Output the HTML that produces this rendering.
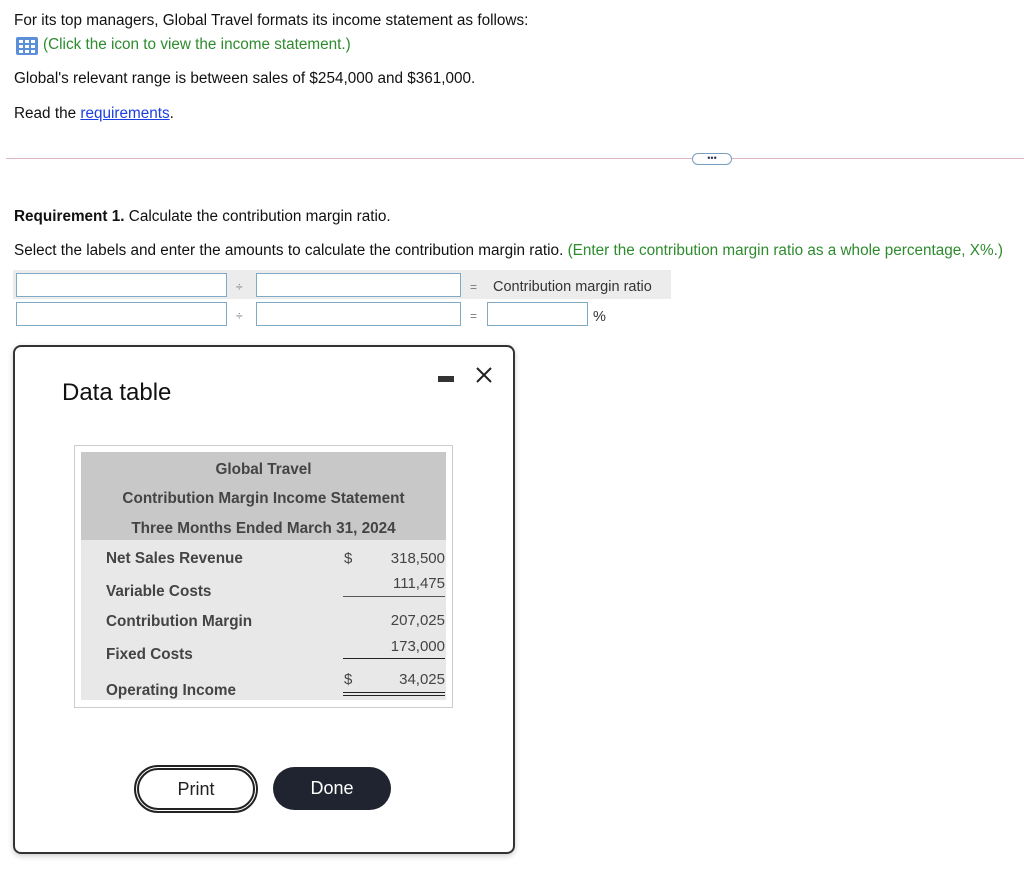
<!DOCTYPE html>
<html><head><style>
body{margin:0;width:1024px;height:879px;background:#fff;font-family:"Liberation Sans",Arial,sans-serif;color:#111;position:relative;overflow:hidden}
.a{position:absolute;white-space:nowrap}
.t{font-size:15.3px}
.inp{position:absolute;height:21px;border:1px solid #7fa9c4;background:#fff;box-sizing:border-box}
.op{position:absolute;font-size:12px;color:#777}
.tb{position:absolute;font-weight:bold;font-size:15.3px;color:#444}
.n{position:absolute;font-size:15px;color:#444;text-align:right;width:80px}
</style></head><body>
<div class="a t" style="left:14px;top:12px">For its top managers, Global Travel formats its income statement as follows:</div>
<svg class="a" style="left:16px;top:37px" width="22" height="18" viewBox="0 0 22 18"><rect x="0" y="0" width="22" height="18" rx="2" fill="#5b8fd9"/><g fill="#fff"><rect x="3" y="3" width="4" height="3"/><rect x="9" y="3" width="4" height="3"/><rect x="15" y="3" width="4" height="3"/><rect x="3" y="8" width="4" height="3"/><rect x="9" y="8" width="4" height="3"/><rect x="15" y="8" width="4" height="3"/><rect x="3" y="13" width="4" height="3"/><rect x="9" y="13" width="4" height="3"/><rect x="15" y="13" width="4" height="3"/></g></svg>
<div class="a t" style="left:43px;top:36px;color:#2e8b2e">(Click the icon to view the income statement.)</div>
<div class="a t" style="left:14px;top:70px">Global's relevant range is between sales of $254,000 and $361,000.</div>
<div class="a t" style="left:14px;top:105px">Read the <span style="color:#1a3fe0;text-decoration:underline">requirements</span>.</div>
<div class="a" style="left:6px;top:158px;width:1018px;height:1px;background:#dcb8c4"></div>
<div class="a" style="left:692px;top:153px;width:38px;height:10px;border:1px solid #7a9cc0;border-radius:6px;background:#fff;font-size:9px;line-height:8px;text-align:center;color:#335">•••</div>
<div class="a t" style="left:14px;top:208px"><b>Requirement 1.</b> Calculate the contribution margin ratio.</div>
<div class="a t" style="left:14px;top:242px">Select the labels and enter the amounts to calculate the contribution margin ratio. <span style="color:#2e8b2e">(Enter the contribution margin ratio as a whole percentage, X%.)</span></div>
<div class="a" style="left:13px;top:270px;width:658px;height:29px;background:#ececec"></div>
<div class="inp" style="left:16px;top:273px;width:211px;height:24px"></div>
<div class="op" style="left:236px;top:280px">÷</div>
<div class="inp" style="left:256px;top:273px;width:205px;height:24px"></div>
<div class="op" style="left:470px;top:280px">=</div>
<div class="a" style="left:493px;top:279px;color:#333;font-size:14.5px">Contribution margin ratio</div>
<div class="inp" style="left:16px;top:302px;width:211px;height:24px"></div>
<div class="op" style="left:236px;top:309px">÷</div>
<div class="inp" style="left:256px;top:302px;width:205px;height:24px"></div>
<div class="op" style="left:470px;top:309px">=</div>
<div class="inp" style="left:487px;top:302px;width:101px;height:24px"></div>
<div class="a" style="left:593px;top:309px;color:#333;font-size:14.5px">%</div>

<div class="a" style="left:13px;top:345px;width:498px;height:505px;border:2px solid #333;border-radius:8px;box-shadow:0 2px 6px rgba(0,0,0,.2)"></div>
<div class="a" style="left:62px;top:379px;font-size:24px;color:#111">Data table</div>
<div class="a" style="left:438px;top:376px;width:16px;height:6px;background:#333"></div>
<svg class="a" style="left:475px;top:366px" width="18" height="18"><path d="M2 2L16 16M16 2L2 16" stroke="#222" stroke-width="2"/></svg>

<div class="a" style="left:74px;top:445px;width:377px;height:261px;border:1px solid #ccc"></div>
<div class="a" style="left:81px;top:452px;width:365px;height:88px;background:#c8c8c8"></div>
<div class="a" style="left:81px;top:540px;width:365px;height:160px;background:#e8e8e8"></div>
<div class="tb" style="left:81px;width:365px;text-align:center;top:461px">Global Travel</div>
<div class="tb" style="left:81px;width:365px;text-align:center;top:490px">Contribution Margin Income Statement</div>
<div class="tb" style="left:81px;width:365px;text-align:center;top:520px">Three Months Ended March 31, 2024</div>
<div class="tb" style="left:106px;top:550px">Net Sales Revenue</div>
<div class="tb" style="left:106px;top:583px">Variable Costs</div>
<div class="tb" style="left:106px;top:613px">Contribution Margin</div>
<div class="tb" style="left:106px;top:646px">Fixed Costs</div>
<div class="tb" style="left:106px;top:682px">Operating Income</div>
<div class="a" style="left:344px;top:550px;font-size:15px;color:#444">$</div>
<div class="n" style="left:365px;top:550px">318,500</div>
<div class="n" style="left:365px;top:575px">111,475</div>
<div class="a" style="left:343px;top:596px;width:102px;height:1px;background:#555"></div>
<div class="n" style="left:365px;top:612px">207,025</div>
<div class="n" style="left:365px;top:638px">173,000</div>
<div class="a" style="left:343px;top:658px;width:102px;height:1px;background:#222"></div>
<div class="a" style="left:344px;top:671px;font-size:15px;color:#444">$</div>
<div class="n" style="left:365px;top:671px">34,025</div>
<div class="a" style="left:343px;top:692px;width:102px;height:1px;background:#222"></div>
<div class="a" style="left:343px;top:695px;width:102px;height:1px;background:#222"></div>

<div class="a" style="left:134px;top:765px;border:5px double #222;border-radius:24px;box-sizing:border-box;width:124px;height:48px"></div>
<div class="a" style="left:134px;top:779px;width:124px;text-align:center;font-size:18px;color:#222">Print</div>
<div class="a" style="left:273px;top:767px;width:118px;height:43px;background:#1f2430;border-radius:22px;color:#fff;font-size:18px;text-align:center;line-height:43px">Done</div>
</body></html>
